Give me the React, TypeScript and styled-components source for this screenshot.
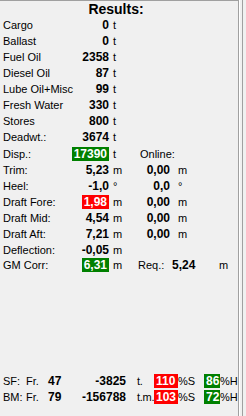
import styled, { createGlobalStyle } from "styled-components";

const GlobalStyle = createGlobalStyle`
  html, body {
    margin: 0;
    padding: 0;
    background: #f0f0f0;
  }
  body {
    font-family: "Liberation Sans", Arial, sans-serif;
    font-size: 11px;
    color: #000;
  }
`;

const StFrame = styled.div`
  display: flex;
  width: 246px;
  height: 416px;
  background: #f0f0f0;
  overflow: hidden;
`;

const StPanel = styled.div`
  display: flex;
  flex-direction: column;
  width: 239px;
  height: 416px;
  border-top: 1px solid #a0a0a0;
  border-right: 1px solid #a0a0a0;
  box-sizing: border-box;
`;

const StEdge = styled.div`
  width: 7px;
  border-left: 1px solid #ffffff;
  display: flex;
  box-sizing: border-box;

  &::after {
    content: "";
    margin-left: 2px;
    width: 1px;
    background: #a0a0a0;
  }
`;

const StTitle = styled.div`
  height: 16px;
  line-height: 16px;
  font-size: 14px;
  font-weight: bold;
  text-align: center;
  padding-right: 6px;
`;

const StRows = styled.div`
  display: flex;
  flex-direction: column;
  padding-left: 3px;
`;

const StRow = styled.div<{ h?: number }>`
  display: grid;
  grid-template-columns: 65px 41px 28px 33px 1fr;
  align-items: center;
  height: ${({ h }) => h ?? 16}px;
  white-space: nowrap;
`;

const StLabel = styled.span`
  font-size: 11px;
`;

const StValue = styled.span`
  justify-self: end;
  font-size: 12px;
  font-weight: bold;
`;

const StUnit = styled.span`
  padding-left: 4px;
  font-size: 11px;
`;

const StRightUnit = styled.span`
  padding-left: 8px;
  font-size: 11px;
`;

const StOnline = styled.span`
  grid-column: 4 / span 2;
  padding-left: 3px;
`;

const StBadge = styled.span<{ tone: "green" | "red" }>`
  display: inline-block;
  padding: 0 2px;
  line-height: 14px;
  color: #fff;
  font-weight: bold;
  font-size: 12px;
  background: ${({ tone }) => (tone === "green" ? "#008000" : "#ff0000")};
`;

const StReq = styled.span`
  grid-column: 4 / span 2;
  display: grid;
  grid-template-columns: 34px 47px 1fr;
  align-items: center;
  padding-left: 1px;
`;

const StSpacer = styled.div`
  flex: 1;
`;

const StBottom = styled.div`
  display: flex;
  flex-direction: column;
  padding: 0 0 11px 3px;
`;

const StBottomRow = styled.div`
  display: grid;
  grid-template-columns: 23px 22px 30px 48px 28px 24px 26px 16px 1fr;
  align-items: center;
  height: 16px;
  white-space: nowrap;
`;

const StBottomValue = styled.span<{ right?: boolean }>`
  font-size: 12px;
  font-weight: bold;
  justify-self: ${({ right }) => (right ? "end" : "start")};
`;

const StBottomUnit = styled.span`
  padding-left: 11px;
  font-size: 11px;
  letter-spacing: -0.3px;
`;

const StPercent = styled.span`
  font-size: 11px;
`;

type Row = {
  label: string;
  value: string;
  unit: string;
  badge?: "green" | "red";
  online?: string;
  onlineUnit?: string;
};

const rows: Row[] = [
  { label: "Cargo", value: "0", unit: "t" },
  { label: "Ballast", value: "0", unit: "t" },
  { label: "Fuel Oil", value: "2358", unit: "t" },
  { label: "Diesel Oil", value: "87", unit: "t" },
  { label: "Lube Oil+Misc", value: "99", unit: "t" },
  { label: "Fresh Water", value: "330", unit: "t" },
  { label: "Stores", value: "800", unit: "t" },
  { label: "Deadwt.:", value: "3674", unit: "t" },
];

const draftRows: Row[] = [
  { label: "Trim:", value: "5,23", unit: "m", online: "0,00", onlineUnit: "m" },
  { label: "Heel:", value: "-1,0", unit: "°", online: "0,0", onlineUnit: "°" },
  { label: "Draft Fore:", value: "1,98", unit: "m", badge: "red", online: "0,00", onlineUnit: "m" },
  { label: "Draft Mid:", value: "4,54", unit: "m", online: "0,00", onlineUnit: "m" },
  { label: "Draft Aft:", value: "7,21", unit: "m", online: "0,00", onlineUnit: "m" },
];

const strength = [
  { name: "SF:", frame: "47", value: "-3825", unit: "t.", s: "110", h: "86" },
  { name: "BM:", frame: "79", value: "-156788", unit: "t.m.", s: "103", h: "72" },
];

const ValueCell = ({ row }: { row: Row }) =>
  row.badge ? (
    <StValue>
      <StBadge tone={row.badge}>{row.value}</StBadge>
    </StValue>
  ) : (
    <StValue>{row.value}</StValue>
  );

const App = () => {
  return (
    <>
      <GlobalStyle />
      <StFrame>
        <StPanel>
          <StTitle>Results:</StTitle>
          <StRows>
            {rows.map((row) => (
              <StRow key={row.label}>
                <StLabel>{row.label}</StLabel>
                <ValueCell row={row} />
                <StUnit>{row.unit}</StUnit>
              </StRow>
            ))}
            <StRow h={17}>
              <StLabel>Disp.:</StLabel>
              <StValue>
                <StBadge tone="green">17390</StBadge>
              </StValue>
              <StUnit>t</StUnit>
              <StOnline>Online:</StOnline>
            </StRow>
            {draftRows.map((row) => (
              <StRow key={row.label}>
                <StLabel>{row.label}</StLabel>
                <ValueCell row={row} />
                <StUnit>{row.unit}</StUnit>
                <StValue>{row.online}</StValue>
                <StRightUnit>{row.onlineUnit}</StRightUnit>
              </StRow>
            ))}
            <StRow>
              <StLabel>Deflection:</StLabel>
              <StValue>-0,05</StValue>
              <StUnit>m</StUnit>
            </StRow>
            <StRow h={14}>
              <StLabel>GM Corr:</StLabel>
              <StValue>
                <StBadge tone="green">6,31</StBadge>
              </StValue>
              <StUnit>m</StUnit>
              <StReq>
                <span>Req.:</span>
                <StBottomValue>5,24</StBottomValue>
                <span>m</span>
              </StReq>
            </StRow>
          </StRows>
          <StSpacer />
          <StBottom>
            {strength.map((r) => (
              <StBottomRow key={r.name}>
                <span>{r.name}</span>
                <span>Fr.</span>
                <StBottomValue>{r.frame}</StBottomValue>
                <StBottomValue right>{r.value}</StBottomValue>
                <StBottomUnit>{r.unit}</StBottomUnit>
                <StBadge tone="red">{r.s}</StBadge>
                <StPercent>%S</StPercent>
                <StBadge tone="green">{r.h}</StBadge>
                <StPercent>%H</StPercent>
              </StBottomRow>
            ))}
          </StBottom>
        </StPanel>
        <StEdge />
      </StFrame>
    </>
  );
};

export default App;
